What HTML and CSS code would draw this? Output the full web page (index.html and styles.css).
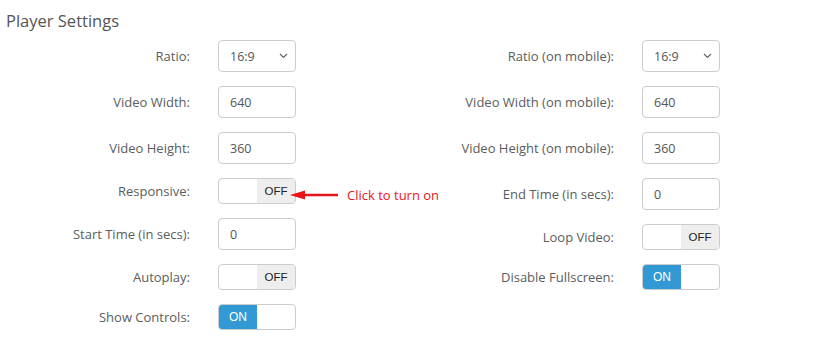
FILE: index.html
```html
<!DOCTYPE html>
<html lang="en">
<head>
    <meta charset="UTF-8">
    <title>Player Settings</title>
    <link rel="stylesheet" href="styles.css">
</head>
<body>
    <h3 class="title">Player Settings</h3>

    <div class="settings">
        <div class="column">
            <label>Ratio:</label>
            <div class="select"><span>16:9</span>
                <svg width="9" height="6" viewBox="0 0 9 6"><path d="M1 1l3.5 3.5L8 1" fill="none" stroke="#666" stroke-width="1.2"/></svg>
            </div>

            <label>Video Width:</label>
            <input type="text" value="640">

            <label>Video Height:</label>
            <input type="text" value="360">

            <label>Responsive:</label>
            <div class="toggle-wrap">
                <div class="toggle off"><span class="blank"></span><span class="state">OFF</span></div>
                <div class="note">
                    <svg width="50" height="10" viewBox="0 0 50 10"><path d="M14 5H48" stroke="#e8141a" stroke-width="2.4"/><path d="M0 5L15 0.5V9.5Z" fill="#e8141a"/></svg>
                    <span>Click to turn on</span>
                </div>
            </div>

            <label>Start Time (in secs):</label>
            <input type="text" value="0">

            <label>Autoplay:</label>
            <div class="toggle off"><span class="blank"></span><span class="state">OFF</span></div>

            <label>Show Controls:</label>
            <div class="toggle on"><span class="state">ON</span><span class="blank"></span></div>
        </div>

        <div class="column">
            <label>Ratio (on mobile):</label>
            <div class="select"><span>16:9</span>
                <svg width="9" height="6" viewBox="0 0 9 6"><path d="M1 1l3.5 3.5L8 1" fill="none" stroke="#666" stroke-width="1.2"/></svg>
            </div>

            <label>Video Width (on mobile):</label>
            <input type="text" value="640">

            <label>Video Height (on mobile):</label>
            <input type="text" value="360">

            <label>End Time (in secs):</label>
            <input type="text" value="0">

            <label>Loop Video:</label>
            <div class="toggle off"><span class="blank"></span><span class="state">OFF</span></div>

            <label>Disable Fullscreen:</label>
            <div class="toggle on"><span class="state">ON</span><span class="blank"></span></div>
        </div>
    </div>
</body>
</html>
```

FILE: styles.css
```css
body {
    margin: 0;
    font-family: 'Open Sans', 'Liberation Sans', sans-serif;
    background: white;
    color: #555;
}
.title {
    margin: 0;
    padding: 9px 0 0 6px;
    height: 31px;
    box-sizing: border-box;
    font-size: 16.5px;
    font-weight: normal;
    color: #555;
}
.settings {
    display: grid;
    grid-template-columns: 424px 413px;
    padding-top: 9px;
}
.column {
    display: grid;
    grid-template-columns: 190px 78px;
    column-gap: 28px;
    row-gap: 14px;
    align-items: center;
    align-content: start;
}
label {
    text-align: right;
    font-size: 13px;
    font-weight: 500;
    color: #5a5d5d;
}
input, .select {
    width: 78px;
    height: 32px;
    box-sizing: border-box;
    border: 1px solid #ccc;
    border-radius: 4px;
    padding: 0 11px;
    font-family: 'Open Sans', 'Liberation Sans', sans-serif;
    font-size: 12.5px;
    color: #555;
    background: white;
}
.select {
    display: flex;
    align-items: center;
    justify-content: space-between;
    padding-right: 7px;
}
.toggle {
    width: 78px;
    height: 26px;
    box-sizing: border-box;
    border: 1px solid #ccc;
    border-radius: 4px;
    display: flex;
    overflow: hidden;
    font-family: 'Liberation Sans', sans-serif;
    font-size: 11.5px;
}
.toggle span {
    flex: 1;
    display: flex;
    align-items: center;
    justify-content: center;
}
.toggle.off .state {
    background: #eee;
    color: #222;
}
.toggle.on .state {
    background: #3399d4;
    color: white;
    font-size: 12px;
}
.toggle-wrap {
    position: relative;
}
.note {
    position: absolute;
    left: 72px;
    top: 8px;
    display: flex;
    align-items: center;
    gap: 7px;
    white-space: nowrap;
    color: #e8141a;
    font-family: 'Open Sans', sans-serif;
    font-size: 13px;
}
```
